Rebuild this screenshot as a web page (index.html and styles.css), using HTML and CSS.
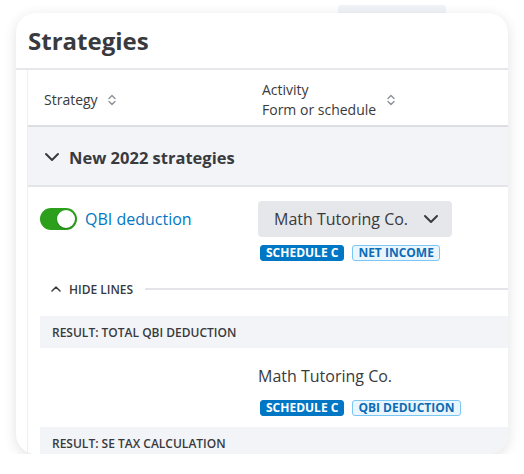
FILE: index.html
```html
<!DOCTYPE html>
<html lang="en">
<head>
  <meta charset="UTF-8">
  <title>Strategies</title>
  <link rel="stylesheet" href="styles.css">
</head>
<body>
  <div class="peek"></div>
  <div class="card">
    <h2 class="card-title">Strategies</h2>

    <div class="table">
      <div class="thead">
        <div class="col-strategy">
          <span>Strategy</span>
          <svg class="sort" width="10" height="14" viewBox="0 0 10 14"><path d="M2 5.5 L5 2.5 L8 5.5 M2 8.5 L5 11.5 L8 8.5" fill="none" stroke="#8d9096" stroke-width="1.4" stroke-linecap="round" stroke-linejoin="round"/></svg>
        </div>
        <div class="col-activity">
          <span>Activity<br>Form or schedule</span>
          <svg class="sort" width="10" height="14" viewBox="0 0 10 14"><path d="M2 5.5 L5 2.5 L8 5.5 M2 8.5 L5 11.5 L8 8.5" fill="none" stroke="#8d9096" stroke-width="1.4" stroke-linecap="round" stroke-linejoin="round"/></svg>
        </div>
      </div>

      <div class="group">
        <svg width="16" height="10" viewBox="0 0 16 10"><path d="M2 2 L8 8 L14 2" fill="none" stroke="#393a3d" stroke-width="2" stroke-linecap="round" stroke-linejoin="round"/></svg>
        <span>New 2022 strategies</span>
      </div>

      <div class="row">
        <div class="col-strategy">
          <span class="toggle"><span class="knob"></span></span>
          <span class="link">QBI deduction</span>
        </div>
        <div class="col-activity">
          <div class="select">
            <span>Math Tutoring Co.</span>
            <svg width="16" height="10" viewBox="0 0 16 10"><path d="M2 2 L8 8 L14 2" fill="none" stroke="#393a3d" stroke-width="2" stroke-linecap="round" stroke-linejoin="round"/></svg>
          </div>
          <div class="tags">
            <span class="tag solid">SCHEDULE C</span>
            <span class="tag outline">NET INCOME</span>
          </div>
        </div>
      </div>

      <div class="hide-lines">
        <svg width="12" height="8" viewBox="0 0 12 8"><path d="M2 6 L6 2 L10 6" fill="none" stroke="#393a3d" stroke-width="1.5" stroke-linecap="round" stroke-linejoin="round"/></svg>
        <span>HIDE LINES</span>
        <div class="rule"></div>
      </div>

      <div class="result">RESULT: TOTAL QBI DEDUCTION</div>
      <div class="sub-row">
        <div class="col-strategy"></div>
        <div class="col-activity">
          <div class="plain">Math Tutoring Co.</div>
          <div class="tags">
            <span class="tag solid">SCHEDULE C</span>
            <span class="tag outline">QBI DEDUCTION</span>
          </div>
        </div>
      </div>
      <div class="result">RESULT: SE TAX CALCULATION</div>
    </div>
  </div>
</body>
</html>
```

FILE: styles.css
```css
body {
  margin: 0;
  background: white;
  font-family: "Open Sans", Lato, sans-serif;
  color: #393a3d;
}
.peek {
  margin: 5px 0 0 338px;
  width: 108px;
  height: 8px;
  background: #f0f3f7;
  border-radius: 3px 3px 0 0;
}
.card {
  margin: 0 0 0 16px;
  width: 492px;
  height: 441px;
  background: white;
  border-radius: 20px;
  box-shadow: 0 3px 14px rgba(0,0,0,0.12);
  overflow: hidden;
}
.card-title {
  margin: 0;
  height: 55px;
  padding-left: 12px;
  display: flex;
  align-items: center;
  font-size: 24px;
  font-weight: 700;
  border-bottom: 2px solid #e6e7ea;
}
.table {
  margin-left: 11px;
  border-left: 1px solid #eef0f2;
}
.thead {
  height: 55px;
  box-sizing: border-box;
  padding-top: 5px;
  display: flex;
  align-items: center;
  font-size: 14px;
  line-height: 20px;
}
.col-strategy {
  width: 230px;
  flex: none;
  display: flex;
  align-items: center;
}
.thead .col-strategy { padding-left: 16px; width: 214px; }
.thead .col-activity { padding-left: 4px; }
.col-activity { display: flex; flex-direction: column; }
.thead .col-activity { flex-direction: row; align-items: center; }
.sort { margin-left: 9px; }
.thead .col-activity .sort { margin-left: 10px; }
.group {
  height: 62px;
  box-sizing: border-box;
  padding: 2px 0 0 16px;
  display: flex;
  align-items: center;
  gap: 9px;
  background: #f3f4f8;
  border-top: 2px solid #dcdee3;
  border-bottom: 2px solid #e3e5e9;
  font-size: 16.5px;
  font-weight: 700;
}
.row {
  display: flex;
  padding-top: 14px;
  height: 92px;
  box-sizing: border-box;
}
.row .col-strategy {
  padding-left: 12px;
  width: 218px;
  align-items: flex-start;
  padding-top: 7px;
  gap: 8px;
}
.toggle {
  width: 37px;
  height: 22px;
  border-radius: 11px;
  background: #2ca01c;
  display: flex;
  align-items: center;
  justify-content: flex-end;
  padding-right: 2px;
  box-sizing: border-box;
}
.knob {
  width: 18px;
  height: 18px;
  border-radius: 50%;
  background: white;
  box-shadow: 0 1px 2px rgba(0,0,0,0.25);
}
.link {
  color: #0077c5;
  font-size: 16px;
  line-height: 22px;
}
.select {
  width: 194px;
  height: 36px;
  box-sizing: border-box;
  padding: 0 13px 0 16px;
  background: #e6e7ea;
  border-radius: 4px;
  display: flex;
  align-items: center;
  justify-content: space-between;
  font-size: 16px;
}
.tags {
  display: flex;
  gap: 8px;
  margin-top: 8px;
  padding-left: 2px;
}
.tag {
  font-size: 12px;
  font-weight: 700;
  line-height: 14px;
  padding: 0 5px;
  border-radius: 3px;
  border: 1px solid #0077c5;
}
.tag.solid {
  background: #0077c5;
  color: white;
}
.tag.outline {
  background: #eaf6fe;
  border-color: #7cc6f4;
  color: #0d6cb5;
}
.hide-lines {
  display: flex;
  align-items: center;
  padding-left: 22px;
  height: 20px;
  font-size: 12px;
  font-weight: 600;
}
.hide-lines svg { margin-right: 7px; }
.rule {
  flex: 1;
  height: 2px;
  background: #e3e5e9;
  margin-left: 12px;
}
.result {
  margin: 17px 0 0 12px;
  height: 32px;
  display: flex;
  align-items: center;
  padding-left: 12px;
  background: #f3f4f8;
  font-size: 12px;
  font-weight: 600;
}
.sub-row + .result { margin-top: 0; }
.sub-row {
  display: flex;
  height: 79px;
  padding-top: 17px;
  box-sizing: border-box;
}
.plain {
  font-size: 16px;
  line-height: 22px;
}
.sub-row .tags { margin-top: 13px; }
```
